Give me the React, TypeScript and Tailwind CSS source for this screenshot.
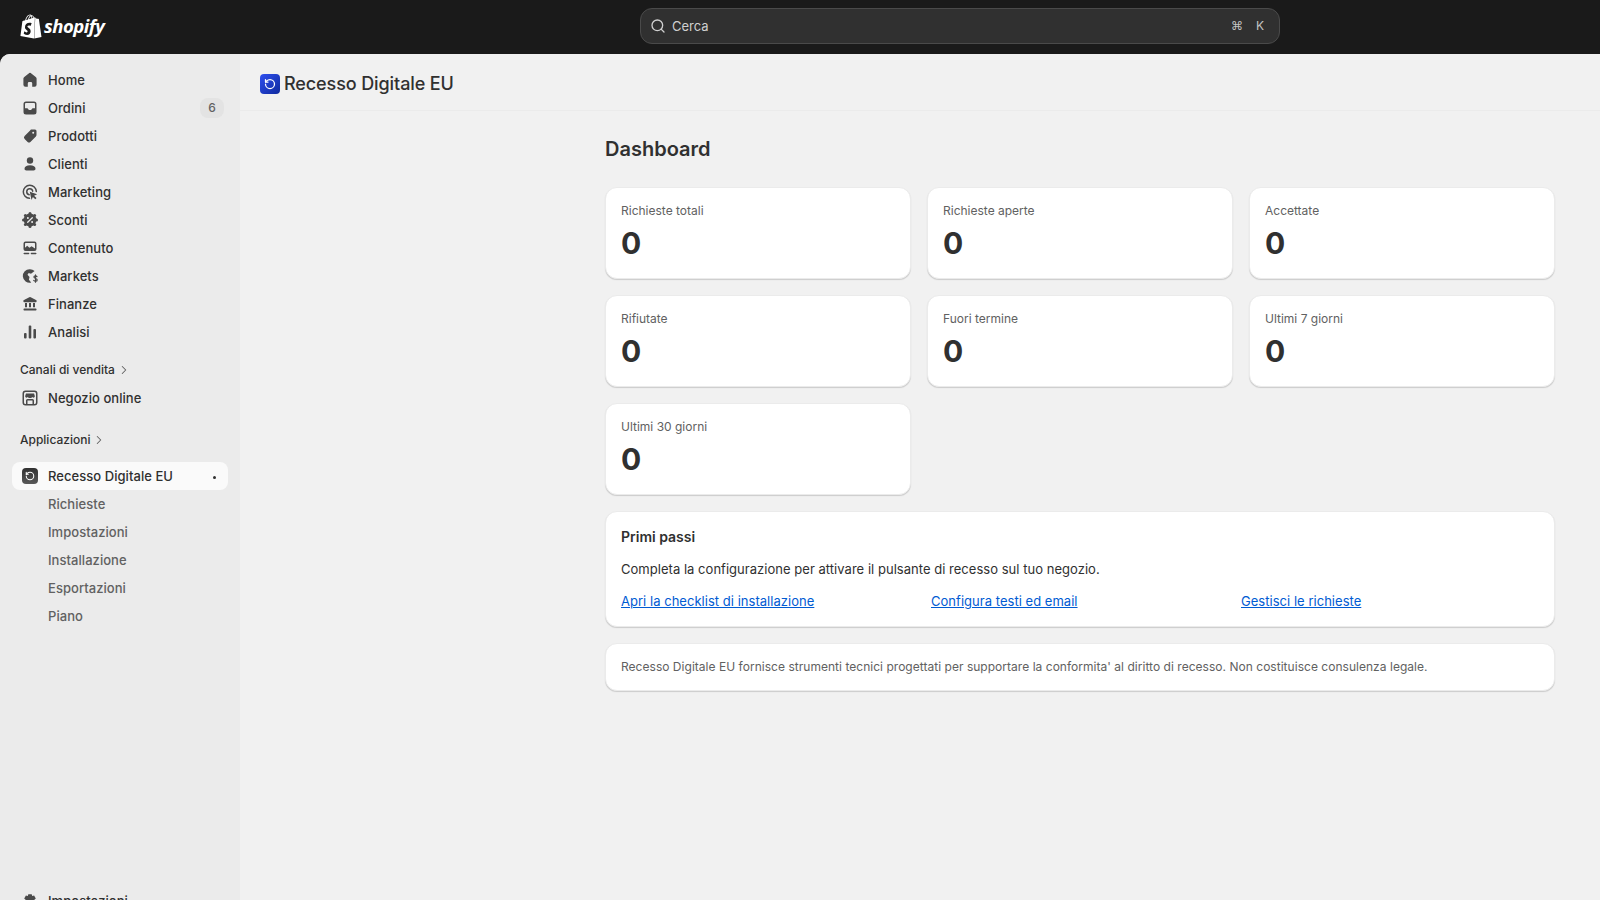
import { ChevronRight, RotateCcw, Search } from "lucide-react";
import type { ReactNode } from "react";
import { SiShopify } from "react-icons/si";

const Icon = ({ children }: { children: ReactNode }) => (
  <svg viewBox="0 0 20 20" className="w-5 h-5 shrink-0 text-[#4a4a4a]" fill="currentColor">
    {children}
  </svg>
);

const icons = {
  home: (
    <path d="M10.7 3a1.100 1.100 0 0 0-1.400 0L4.300 6.900a2.200 2.200 0 0 0-.9 1.700V14.800a2 2 0 0 0 2 2h2.400v-3.600a1.300 1.300 0 0 1 1.300-1.300h1.800a1.300 1.300 0 0 1 1.300 1.300v3.600h2.400a2 2 0 0 0 2-2V8.600a2.200 2.200 0 0 0-.9-1.700z" />
  ),
  orders: (
    <path
      fillRule="evenodd"
      d="M6 3.500h8A2.500 2.500 0 0 1 16.500 6v8a2.500 2.500 0 0 1-2.500 2.500H6A2.500 2.500 0 0 1 3.500 14V6A2.500 2.500 0 0 1 6 3.500zM5 10.200h2.600c.3 1.100 1.200 1.800 2.400 1.800s2.100-.7 2.400-1.800H15V6a1 1 0 0 0-1-1H6a1 1 0 0 0-1 1z"
    />
  ),
  tag: (
    <path
      fillRule="evenodd"
      d="M11 3.500h4A1.500 1.500 0 0 1 16.500 5v4a2 2 0 0 1-.6 1.400l-5.500 5.500a2 2 0 0 1-2.800 0l-3-3a2 2 0 0 1 0-2.800l5.500-5.500A2 2 0 0 1 11 3.500zM13.200 5.800a1 1 0 1 0 0 2 1 1 0 0 0 0-2z"
    />
  ),
  person: (
    <>
      <circle cx="10" cy="6.500" r="3.200" />
      <path d="M4.500 14.800c0-2.300 2.200-3.600 5.500-3.600s5.500 1.300 5.500 3.600c0 1-.8 1.700-1.800 1.700H6.300c-1 0-1.800-.7-1.800-1.700z" />
    </>
  ),
  marketing: (
    <>
      <path
        d="M16.300 9.500a6.500 6.500 0 1 0-6.800 6.800"
        fill="none"
        stroke="currentColor"
        strokeWidth="1.500"
        strokeLinecap="round"
      />
      <path
        d="M12.700 9.200a3 3 0 1 0-3.500 3.500"
        fill="none"
        stroke="currentColor"
        strokeWidth="1.500"
        strokeLinecap="round"
      />
      <path d="M9.800 9.800l7.300 2.500-3 1.400 2.400 2.400-1.200 1.200-2.400-2.400-1.400 3z" />
    </>
  ),
  discount: (
    <>
      <circle cx="10" cy="10" r="6.400" />
      <circle cx="10" cy="3.500" r="1.500" />
      <circle cx="10" cy="16.500" r="1.500" />
      <circle cx="3.500" cy="10" r="1.500" />
      <circle cx="16.500" cy="10" r="1.500" />
      <circle cx="5.400" cy="5.400" r="1.500" />
      <circle cx="14.600" cy="5.400" r="1.500" />
      <circle cx="5.400" cy="14.600" r="1.500" />
      <circle cx="14.600" cy="14.600" r="1.500" />
      <path d="M7.700 12.300l4.600-4.600" stroke="#ebebeb" strokeWidth="1.300" strokeLinecap="round" />
      <circle cx="7.900" cy="7.900" r="1" fill="#ebebeb" />
      <circle cx="12.100" cy="12.100" r="1" fill="#ebebeb" />
    </>
  ),
  content: (
    <>
      <path
        fillRule="evenodd"
        d="M5.500 3.500h9a2 2 0 0 1 2 2V11a2 2 0 0 1-2 2h-9a2 2 0 0 1-2-2V5.500a2 2 0 0 1 2-2zM5 9.800l2.200-2 2.200 1.900 2.100-1.500L15 10.400V5.700a.7.7 0 0 0-.7-.7H5.700a.7.7 0 0 0-.7.7z"
      />
      <rect x="3.500" y="14.800" width="5.800" height="1.500" rx=".7" />
      <rect x="10.700" y="14.800" width="5.800" height="1.500" rx=".7" />
    </>
  ),
  markets: (
    <>
      <path
        fillRule="evenodd"
        d="M10 3.200a6.800 6.800 0 0 1 4.600 1.800L11 7.800 8.700 6.900 7.500 8.800l2 2.300-.6 2.600 2.300 2.900A6.800 6.800 0 1 1 10 3.200z"
      />
      <path
        d="M17 10.600c-.4-.5-1-.7-1.600-.7-.9 0-1.500.5-1.500 1.200 0 1.700 3.300 1 3.300 2.800 0 .8-.7 1.300-1.700 1.300-.7 0-1.400-.3-1.800-.8M15.500 8.900v7.300"
        fill="none"
        stroke="currentColor"
        strokeWidth="1.200"
        strokeLinecap="round"
      />
    </>
  ),
  finance: (
    <path
      fillRule="evenodd"
      d="M9.300 3.200a1.600 1.600 0 0 1 1.400 0l5.300 2.700c.4.200.6.500.6.900v.7c0 .4-.3.700-.7.700H4.100a.7.700 0 0 1-.7-.7v-.7c0-.4.200-.7.600-.9zM5 9h2v4.300H5zM9 9h2v4.300H9zM13 9h2v4.300h-2zM4.200 14.500h11.600c.4 0 .7.300.7.700v.6c0 .4-.3.700-.7.700H4.200a.7.700 0 0 1-.7-.7v-.6c0-.4.300-.7.700-.7z"
    />
  ),
  analytics: (
    <>
      <rect x="4" y="11" width="2.600" height="5.500" rx="1" />
      <rect x="8.700" y="3.500" width="2.600" height="13" rx="1" />
      <rect x="13.400" y="7" width="2.600" height="9.500" rx="1" />
    </>
  ),
  store: (
    <path
      fillRule="evenodd"
      d="M5.500 2.500h9a3 3 0 0 1 3 3v9a3 3 0 0 1-3 3h-9a3 3 0 0 1-3-3v-9a3 3 0 0 1 3-3zM5.500 4A1.500 1.500 0 0 0 4 5.500v9A1.500 1.500 0 0 0 5.500 16H6v-3.500a1.500 1.500 0 0 1 1.500-1.500h5a1.500 1.500 0 0 1 1.500 1.500V16h.5a1.500 1.500 0 0 0 1.500-1.500v-9A1.500 1.500 0 0 0 14.500 4zM7.500 16h5v-3.500h-5zM6 5.500h8l.8 2.600a1.300 1.300 0 0 1-2.400.9 2.500 2.500 0 0 1-2.400 1 2.500 2.500 0 0 1-2.400-1 1.300 1.300 0 0 1-2.400-.9z"
    />
  ),
  settings: (
    <path d="M8.300 3.200h3.400l.5 1.900 1.900-.6 1.700 3-1.400 1.300v2.400l1.400 1.300-1.700 3-1.900-.6-.5 1.900H8.300l-.5-1.900-1.900.6-1.700-3 1.400-1.300V8.800L4.200 7.500l1.700-3 1.900.6z" />
  ),
};

const mainNav = [
  { label: "Home", icon: icons.home },
  { label: "Ordini", icon: icons.orders, badge: "6" },
  { label: "Prodotti", icon: icons.tag },
  { label: "Clienti", icon: icons.person },
  { label: "Marketing", icon: icons.marketing },
  { label: "Sconti", icon: icons.discount },
  { label: "Contenuto", icon: icons.content },
  { label: "Markets", icon: icons.markets },
  { label: "Finanze", icon: icons.finance },
  { label: "Analisi", icon: icons.analytics },
];

const subNav = ["Richieste", "Impostazioni", "Installazione", "Esportazioni", "Piano"];

const stats = [
  "Richieste totali",
  "Richieste aperte",
  "Accettate",
  "Rifiutate",
  "Fuori termine",
  "Ultimi 7 giorni",
  "Ultimi 30 giorni",
];

const links = ["Apri la checklist di installazione", "Configura testi ed email", "Gestisci le richieste"];

const card = "bg-white rounded-xl border border-[#ebebeb] shadow-[0_1px_1px_rgba(0,0,0,0.16)]";

function NavRow({ label, icon, badge }: { label: string; icon: ReactNode; badge?: string }) {
  return (
    <div className="h-7 flex items-center gap-2 pl-2 pr-1 text-[13px] tracking-[0.05px] font-medium text-[#303030]">
      <Icon>{icon}</Icon>
      <span className="flex-1 pt-0.5">{label}</span>
      {badge && (
        <span className="w-6 h-5 rounded-lg bg-[#e3e3e3] text-xs text-[#616161] flex items-center justify-center">
          {badge}
        </span>
      )}
    </div>
  );
}

function SectionLabel({ label, className }: { label: string; className: string }) {
  return (
    <div className={`h-5 flex items-center gap-0.5 px-2 text-xs font-medium text-[#303030] ${className}`}>
      {label}
      <ChevronRight className="w-3.5 h-3.5 text-[#616161]" strokeWidth={1.75} />
    </div>
  );
}

export default function App() {
  return (
    <div className="h-screen overflow-hidden bg-[#1a1a1a] flex flex-col font-['Inter',sans-serif]">
      <header className="h-[54px] shrink-0 flex items-center relative">
        <div className="flex items-center gap-px pl-[19px] pb-0.5 text-white">
          <SiShopify className="w-[24px] h-[25px]" />
          <span className="font-['Open_Sans',sans-serif] italic font-bold text-[18.5px] tracking-[-0.5px] leading-none">
            shopify
          </span>
        </div>
        <div className="absolute left-[640px] top-2 w-[640px] h-9 rounded-xl bg-[#303030] border border-[#4a4a4a] flex items-center pl-[9px] pr-[15px] text-[#d0d0d0] text-[13px]">
          <Search className="w-4 h-4 mr-[6px]" strokeWidth={2} />
          <span className="flex-1 pt-0.5">Cerca</span>
          <span className="text-xs text-[#c4c4c4] font-['DejaVu_Sans',sans-serif] mr-[13px]">⌘</span>
          <span className="text-xs text-[#c4c4c4]">K</span>
        </div>
      </header>

      <div className="flex-1 min-h-0 flex rounded-tl-[10px] overflow-hidden bg-[#f1f1f1]">
        <aside className="w-60 shrink-0 bg-[#ebebeb] pt-3 px-3 flex flex-col overflow-hidden">
          {mainNav.map((item) => (
            <NavRow key={item.label} {...item} />
          ))}
          <SectionLabel label="Canali di vendita" className="mt-3.5 mb-1" />
          <NavRow label="Negozio online" icon={icons.store} />
          <SectionLabel label="Applicazioni" className="mt-[18px] mb-3" />
          <div className="h-7 flex items-center gap-2 pl-2 pr-3 rounded-lg bg-[#fafafa] text-[13px] tracking-[0.05px] font-medium text-[#303030]">
            <span className="w-4 h-4 mx-0.5 rounded-[4px] bg-gradient-to-b from-[#303030] to-[#5a5a5a] flex items-center justify-center">
              <RotateCcw className="w-2.5 h-2.5 text-white" strokeWidth={2.5} />
            </span>
            <span className="flex-1 pt-0.5">Recesso Digitale EU</span>
            <span className="w-[3px] h-[3px] rounded-full bg-[#303030] mt-0.5" />
          </div>
          {subNav.map((label) => (
            <div
              key={label}
              className="h-7 flex items-center pl-9 pt-0.5 text-[13px] tracking-[0.05px] font-medium text-[#616161]"
            >
              {label}
            </div>
          ))}
          <div className="mt-auto -mb-[15px]">
            <NavRow label="Impostazioni" icon={icons.settings} />
          </div>
        </aside>

        <main className="flex-1 min-w-0">
          <div className="h-[57px] pt-[3px] flex items-center gap-1 pl-5 border-b border-[#ebebeb]">
            <span className="w-5 h-5 rounded-[4px] bg-gradient-to-br from-[#2f50f0] to-[#0f2a9e] flex items-center justify-center">
              <RotateCcw className="w-3 h-3 text-white" strokeWidth={2.5} />
            </span>
            <h1 className="text-lg tracking-[-0.1px] font-medium text-[#303030]">Recesso Digitale EU</h1>
          </div>

          <div className="pl-[365px] pr-[45px] pt-6 flex flex-col gap-4">
            <h2 className="text-xl font-semibold text-[#303030] leading-7 mb-2">Dashboard</h2>
            <div className="grid grid-cols-3 gap-4">
              {stats.map((label) => (
                <div key={label} className={`${card} p-[15px]`}>
                  <div className="text-xs leading-4 text-[#616161]">{label}</div>
                  <div className="text-[30px] leading-10 font-bold text-[#303030] mt-1">0</div>
                </div>
              ))}
            </div>
            <div className={`${card} p-[15px]`}>
              <div className="text-sm leading-5 font-semibold text-[#303030]">Primi passi</div>
              <p className="text-[13px] tracking-[0.03px] leading-5 text-[#303030] mt-3">
                Completa la configurazione per attivare il pulsante di recesso sul tuo negozio.
              </p>
              <div className="grid grid-cols-3 gap-3 mt-3">
                {links.map((label) => (
                  <a key={label} className="text-[13px] tracking-[0.03px] leading-5 text-[#005bd3] underline">
                    {label}
                  </a>
                ))}
              </div>
            </div>
            <div className={`${card} h-12 px-[15px] flex items-center text-xs tracking-[0.03px] text-[#616161]`}>
              Recesso Digitale EU fornisce strumenti tecnici progettati per supportare la conformita' al diritto di
              recesso. Non costituisce consulenza legale.
            </div>
          </div>
        </main>
      </div>
    </div>
  );
}
